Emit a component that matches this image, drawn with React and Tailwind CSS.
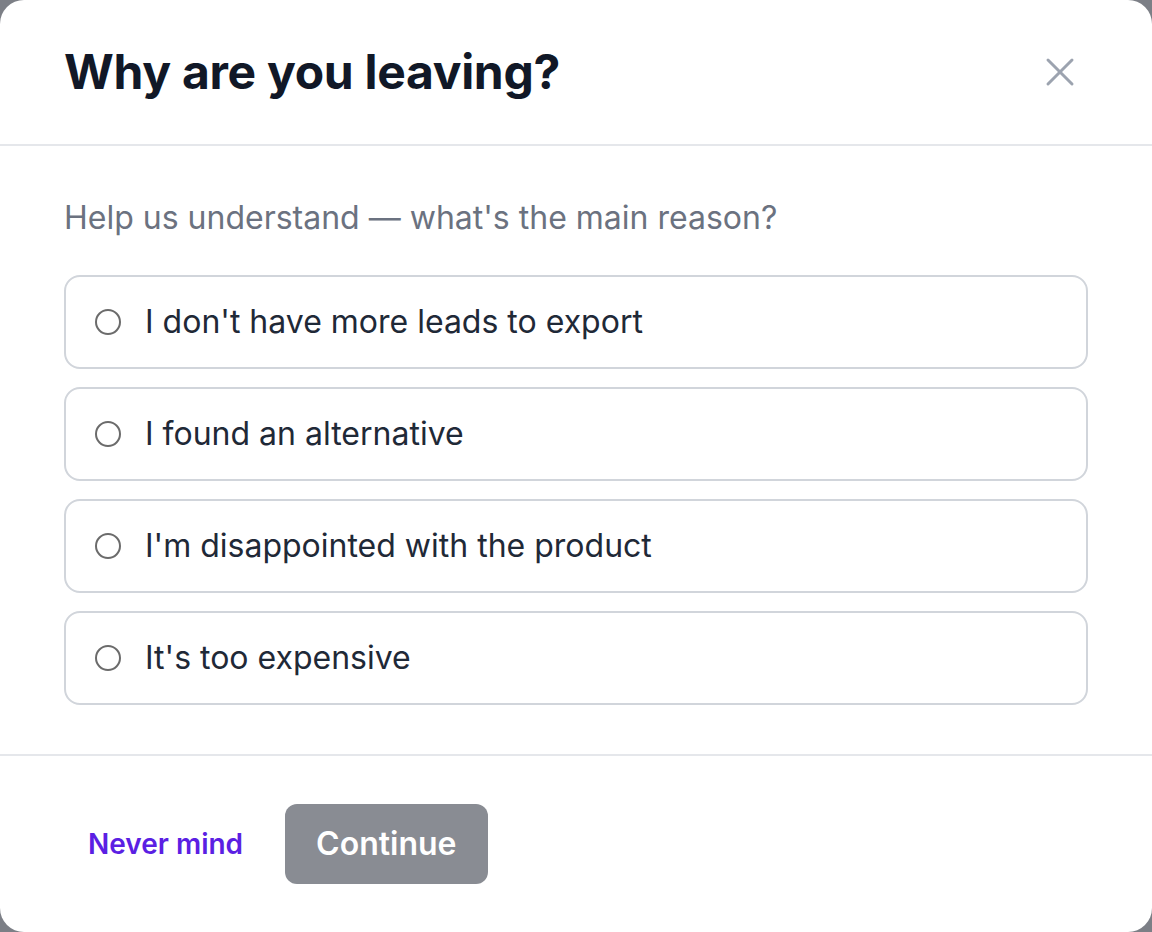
import { useState } from 'react';
import { X } from 'lucide-react';

const reasons = [
  "I don't have more leads to export",
  'I found an alternative',
  "I'm disappointed with the product",
  "It's too expensive",
];

const CancelSurvey = () => {
  const [selected, setSelected] = useState(null);

  return (
    <div className="h-[932px] w-[1152px] bg-[#7c7f86] font-['Inter',sans-serif]">
      <div className="flex h-full flex-col rounded-[24px] bg-white">
        {/* Header */}
        <div className="flex items-center justify-between border-b-2 border-[#e5e7eb] pl-16 pr-[68px] py-10">
          <h1 className="text-[48px] font-bold leading-[64px] tracking-[-0.3px] text-[#111827]">
            Why are you leaving?
          </h1>
          <button className="text-[#9ca3af]">
            <X size={48} strokeWidth={1.5} />
          </button>
        </div>

        {/* Reasons */}
        <div className="border-b-2 border-[#e5e7eb] px-16 pt-12 pb-[49px]">
          <p className="mb-[33px] text-[32px] leading-[48px] text-[#6b7280]">
            Help us understand — what's the main reason?
          </p>
          <div className="flex flex-col gap-[18px]">
            {reasons.map((r, i) => (
              <label
                key={r}
                onClick={() => setSelected(i)}
                className="flex cursor-pointer items-center rounded-[16px] border-2 border-[#d1d5db] pl-[29px] pr-7 py-[21px]"
              >
                <span
                  className={`h-[26px] w-[26px] shrink-0 rounded-full border-2 ${
                    selected === i ? 'border-[#5b1fe3] bg-[#5b1fe3]' : 'border-[#6b6b6b]'
                  }`}
                />
                <span className="ml-[24px] text-[32px] leading-[48px] text-[#1f2937]">{r}</span>
              </label>
            ))}
          </div>
        </div>

        {/* Footer */}
        <div className="flex items-center gap-[18px] px-16 pt-[48px] pb-12">
          <button className="px-6 text-[28px] font-semibold leading-[40px] text-[#5b1fe3]">
            Never mind
          </button>
          <button
            disabled={selected === null}
            className="h-[80px] rounded-[12px] bg-[#898c93] px-[31px] text-[32px] font-semibold text-white"
          >
            Continue
          </button>
        </div>
      </div>
    </div>
  );
};

export default CancelSurvey;
